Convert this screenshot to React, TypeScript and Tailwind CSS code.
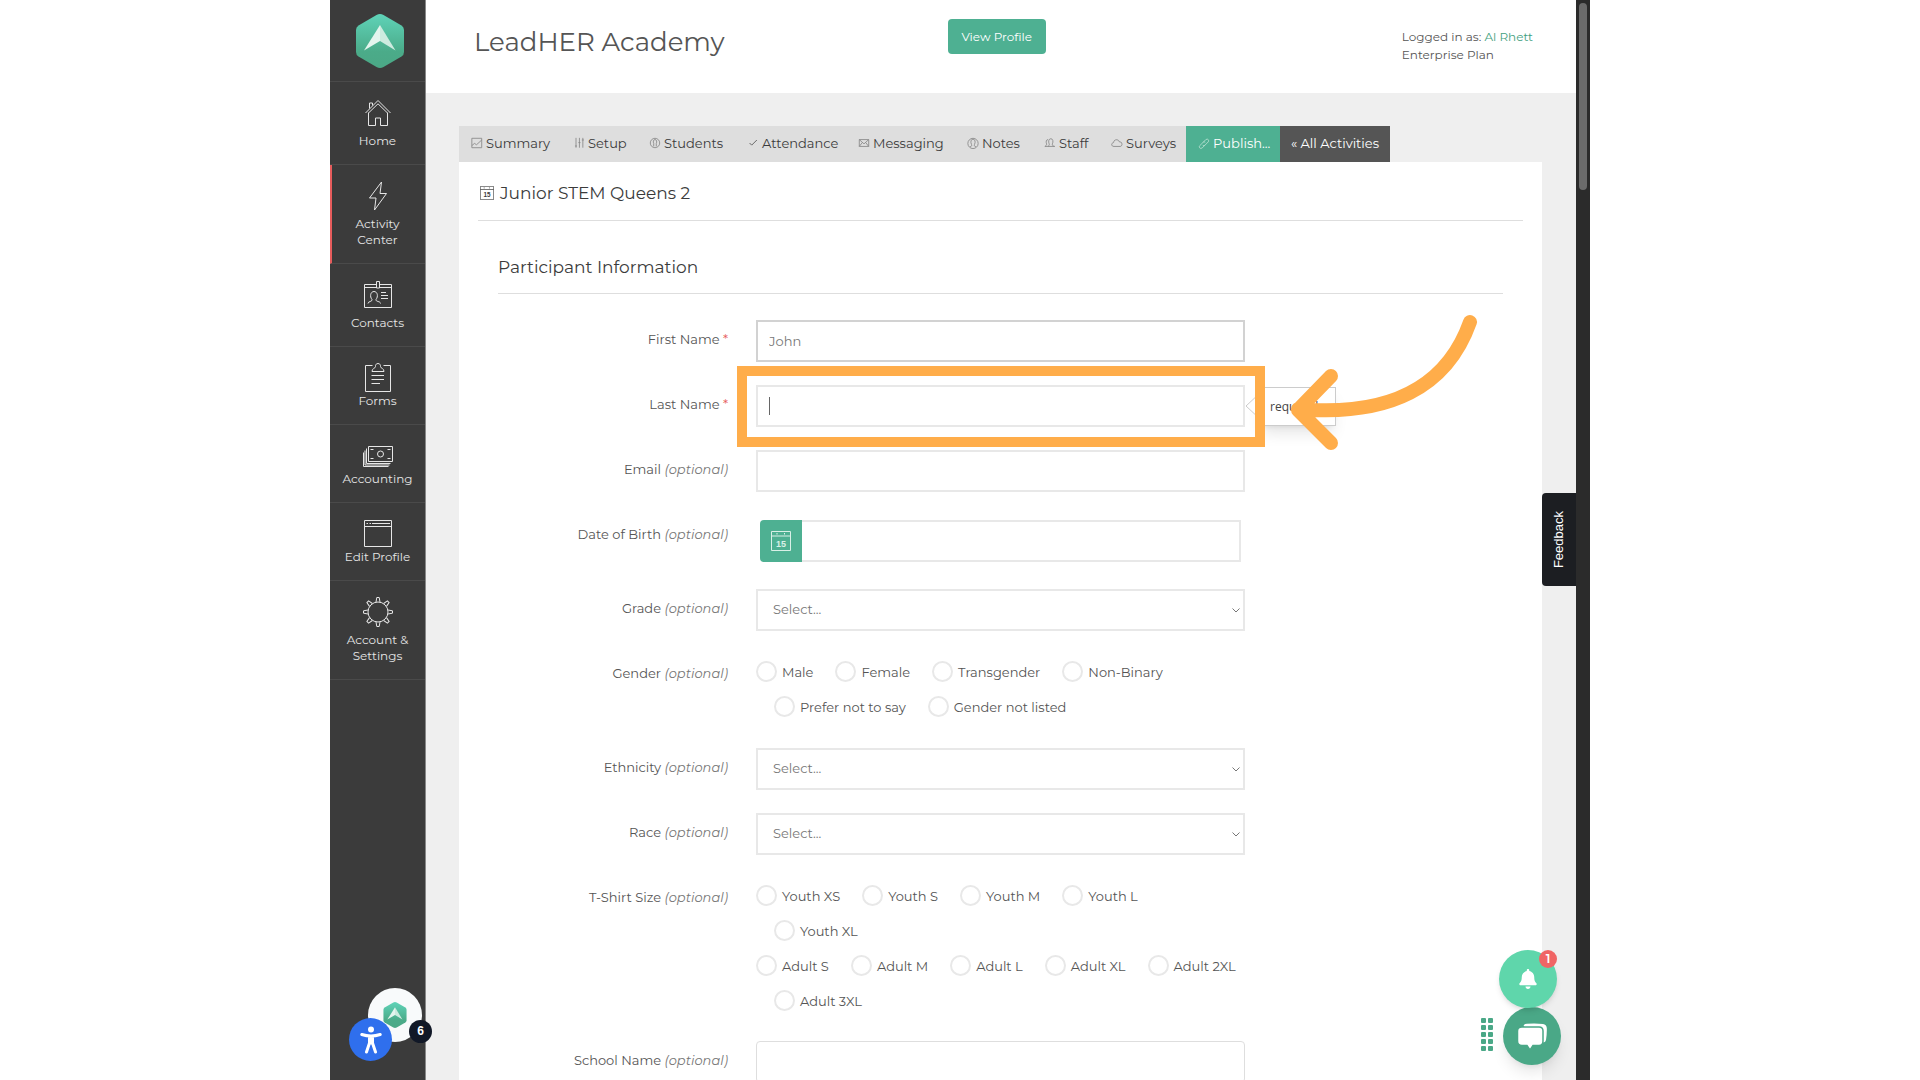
import type { ReactNode } from 'react'
import { FaBell } from 'react-icons/fa'

const Icon = ({ size = 30, box = 30, children }: { size?: number; box?: number; children: ReactNode }) => (
    <svg width={size} height={size} viewBox={`0 0 ${box} ${box}`} fill="none" stroke="currentColor" className="shrink-0">
        {children}
    </svg>
)

const HexLogo = ({ className }: { className: string }) => (
    <svg viewBox="0 0 48 54" className={className}>
        <defs>
            <linearGradient id="hex" x1="0" y1="0" x2="0" y2="1">
                <stop offset="0" stopColor="#5fd3b8" />
                <stop offset="0.7" stopColor="#4bab89" />
                <stop offset="1" stopColor="#4ba886" />
            </linearGradient>
        </defs>
        <path d="M20.500 1Q24 -0.800 27.500 1L45.500 11.500Q48 13 48 16V38Q48 41 45.500 42.500L27.500 53Q24 54.800 20.500 53L2.500 42.500Q0 41 0 38V16Q0 13 2.500 11.500Z" fill="url(#hex)" />
        <path d="M24 11L8 36.500L24 27Z" fill="#e4f5ee" />
        <path d="M24 11L39.500 36.500L24 27Z" fill="#cdebdf" />
    </svg>
)

const HomeIcon = () => (
    <Icon>
        <path d="M2.500 15L15 2.500L27.500 15M5.500 14.500V27.500H12.500V20H17.500V27.500H24.500V14.500M5.500 15L15 5.800L24.500 15M6.500 10.500V5H9.500V7.500" />
    </Icon>
)

const BoltIcon = () => (
    <Icon>
        <path d="M18.500 1L6.500 17H13L11.500 29L23.500 12.500H17Z" />
    </Icon>
)

const ContactsIcon = () => (
    <Icon>
        <path d="M13 4.500H1.500V27.500H28.500V4.500H17M1.500 7.500H13M17 7.500H28.500M13.500 1.500H16.500V8H13.500ZM18 12.500H23M18 15.500H25M18 18.500H25" />
        <path d="M5 23.500C5 21 9.500 22 9 19.500C6.500 16.500 7.500 11.500 11 11.500S15.500 16.500 13 19.500C12.500 22 17.500 21 17.500 23.500" />
    </Icon>
)

const FormsIcon = () => (
    <Icon>
        <path d="M9.500 2.500H2.500V28.500H27.500V2.500H20.500M9 8.500H21C21 5 18 6 17.500 3.500C18 -0.500 12 -0.500 12.500 3.500C12 6 9 5 9 8.500ZM8.500 12.500H21M8.500 16.500H21M8.500 20.500H17" />
    </Icon>
)

const MoneyIcon = () => (
    <Icon>
        <path d="M5.500 5.500H29.500V20.500H5.500ZM3.500 7.500V22.500H27.500M2 9.500V24H26.500M0.500 11.500V25.500H25.500M7.500 8.500H10.500M24.500 8.500H27.500M7.500 17.500H10.500M24.500 17.500H27.500" />
        <circle cx="17.500" cy="13" r="3" />
    </Icon>
)

const WindowIcon = () => (
    <Icon>
        <path d="M1.500 1.500H28.500V27.500H1.500ZM1.500 7.500H28.500M3.500 4.500H5M6.500 4.500H8M9 4.500H27" />
    </Icon>
)

const GearIcon = () => (
    <Icon>
        <circle cx="15" cy="15" r="10" />
        {[0, 45, 90, 135, 180, 225, 270, 315].map((a) => (
            <path key={a} d="M13 5L13.800 0.500H16.200L17 5" transform={`rotate(${a} 15 15)`} />
        ))}
    </Icon>
)

const CalendarIcon = ({ size }: { size: number }) => (
    <svg width={size} height={size} viewBox="0 0 20 20" fill="none" stroke="currentColor" className="shrink-0">
        <path d="M0.500 0.500H19.500V19.500H0.500ZM0.500 5H19.500M6 2V3.500M13.500 2V3.500" />
        <text x="10" y="15.500" textAnchor="middle" fontSize="9" fontWeight="700" fontFamily="Liberation Sans, sans-serif" fill="currentColor" stroke="none">
            15
        </text>
    </svg>
)

const person = 'M3.500 11.500C5.500 11 5.800 10 5.300 8.800C3.800 6 4.500 2.500 7 2.500S10.200 6 8.700 8.800C8.200 10 8.500 11 10.500 11.500'

const tabs = [
    { name: 'Summary', width: 'w-[102px]', icon: <path d="M1 1.500H12.500V12.500H1ZM1 10L4 7.500L6.500 9L12.500 3.500" /> },
    { name: 'Setup', width: 'w-[76px]', icon: <path d="M3.500 1V12.500M2.300 10.500H4.700M7.500 1V12.500M6.300 6.500H8.700M11.500 1V12.500M10.300 3.500H12.700" /> },
    { name: 'Students', width: 'w-[98px]', icon: <><circle cx="7" cy="7" r="5.500" /><path d="M5.500 11V7.500C4.500 5.500 5 3 7 3S9.500 5.500 8.500 7.500V11" /></> },
    { name: 'Attendance', width: 'w-[111px]', icon: <path d="M3 7L5.500 9.500L11.500 3.500" stroke="#555" /> },
    { name: 'Messaging', width: 'w-[109px]', icon: <path d="M1.500 3H12.500V11H1.500ZM1.500 3L7 8L12.500 3M1.500 11L5 6.500M12.500 11L9 6.500" /> },
    { name: 'Notes', width: 'w-[77px]', icon: <><circle cx="7" cy="7.500" r="6" /><path d={person} /></> },
    { name: 'Staff', width: 'w-[67px]', icon: <><path d="M4 11C6 10.500 6.500 9.500 6 8C4.800 5.500 5.500 2 8 2S11 5.500 9.800 8C9.500 9.500 10 10.500 12.500 11Z" /><path d="M1 11C2.500 10 3.300 9.500 3 8C2 5.500 2.500 3 4.800 3M1 11H4" /></> },
    { name: 'Surveys', width: 'w-[87px]', icon: <path d="M3.500 11C0 11 0 7 3 6.500C3 2.500 9 2 9.500 5.500C13.500 5 14 11 10.500 11Z" /> },
]

const navItems = [
    { name: 'Home', icon: <HomeIcon />, roomy: true },
    { name: 'Activity Center', icon: <BoltIcon />, roomy: true, active: true },
    { name: 'Contacts', icon: <ContactsIcon />, roomy: true },
    { name: 'Forms', icon: <FormsIcon /> },
    { name: 'Accounting', icon: <MoneyIcon /> },
    { name: 'Edit Profile', icon: <WindowIcon /> },
    { name: 'Account & Settings', icon: <GearIcon />, roomy: true },
]

const Sidebar = () => (
    <nav className="w-24 shrink-0 bg-[#3b3b3b] border-r border-[#888] text-[#e6e6e6]">
        <a href="#" className="flex justify-center items-start pt-3.5 pl-1 h-[82px] border-b border-[#4a4a4a]">
            <HexLogo className="w-12 h-[54px]" />
        </a>
        {navItems.map((item) => (
            <a
                key={item.name}
                href="#"
                className={`flex flex-col items-center px-3 pt-4 pb-[15px] border-b border-b-[#4a4a4a] text-xs leading-4 text-center ${
                    item.active ? 'border-l-2 border-l-[#e65c5c] pr-3.5' : ''
                } ${item.roomy ? 'gap-[5px]' : ''}`}
            >
                {item.icon}
                {item.name}
            </a>
        ))}
    </nav>
)

const Row = ({ label, id, required, className = 'h-[65px]', children }: { label: string; id: string; required?: boolean; className?: string; children: ReactNode }) => (
    <div className={`flex gap-7 ${className}`}>
        <label htmlFor={id} className="w-[230px] shrink-0 pt-[9px] text-right text-[13px] leading-5 whitespace-nowrap">
            {label} {required ? <span className="text-[#e65c5c]">*</span> : <em className="text-[#777]">(optional)</em>}
        </label>
        <div className="relative w-[489px]">{children}</div>
    </div>
)

const inputStyle = 'block w-full h-[42px] border-2 border-[#e8e8e8] bg-white px-[11px] text-[13px] text-[#777] outline-none'

const SelectBox = ({ id }: { id: string }) => (
    <>
        <select id={id} className="block w-full h-[42px] appearance-none border-2 border-[#e8e8e8] bg-white px-[15px] text-[13px] text-[#777]">
            <option>Select...</option>
        </select>
        <svg viewBox="0 0 8 5" fill="none" stroke="#777" className="pointer-events-none absolute right-[5px] top-[19px] w-2 h-[5px]">
            <path d="M0.500 0.500L4 4L7.500 0.500" />
        </svg>
    </>
)

const RadioLine = ({ group, items, indent }: { group: string; items: string[]; indent?: boolean }) => (
    <div className={`flex items-center gap-[22px] h-[35px] ${indent ? 'ml-[18px]' : ''}`}>
        {items.map((item) => (
            <label key={item} className="flex items-center gap-[5px] text-[13px] leading-5 whitespace-nowrap">
                <input type="radio" name={group} className="appearance-none w-[21px] h-[21px] rounded-full border-2 border-[#e8e8e8] bg-white" />
                {item}
            </label>
        ))}
    </div>
)

const Callout = () => (
    <>
        {/* validation bubble */}
        <div className="absolute left-[503px] top-0.5 flex items-center w-[77px] h-[39px] pl-2.5 border border-[#ccc] bg-white shadow-lg font-['Open_Sans',sans-serif] text-xs text-[#444]">
            required
        </div>
        <svg viewBox="0 0 15 26" className="absolute left-[489px] top-2 w-[15px] h-[26px]">
            <path d="M15 0L1 13L15 26" fill="#fff" stroke="#ccc" />
        </svg>
        {/* highlight and arrow */}
        <div className="absolute -left-[19px] -right-[20px] -top-[19px] -bottom-[20px] border-10 border-[#ffad4a]"></div>
        <svg viewBox="0 0 265 155" fill="none" stroke="#ffad4a" strokeWidth="14" strokeLinecap="round" strokeLinejoin="round" className="absolute left-[469px] -top-20 w-[265px] h-[155px]">
            <path d="M245 17C222 82 165 112 73 104M106 71L73 105L106 138" />
        </svg>
    </>
)

const ParticipantForm = () => (
    <form className="mt-[26px]">
        <Row label="First Name" id="first" required>
            <input id="first" type="text" defaultValue="John" className={`${inputStyle} border-[#d2d2d2]!`} />
        </Row>
        <Row label="Last Name" id="last" required>
            <div className="relative z-10">
                <input id="last" type="text" className={inputStyle} />
                <span className="absolute left-[13px] top-3 w-px h-[18px] bg-[#666]"></span>
                <Callout />
            </div>
        </Row>
        <Row label="Email" id="email">
            <input id="email" type="email" className={inputStyle} />
        </Row>
        <Row label="Date of Birth" id="dob" className="h-[74px]">
            <div className="flex mx-1 pt-[5px]">
                <button type="button" aria-label="Pick a date" className="flex items-center justify-center w-[42px] h-[42px] shrink-0 rounded-l bg-[#4eb092] text-[#d9f0e7]">
                    <CalendarIcon size={20} />
                </button>
                <input id="dob" type="text" className={`${inputStyle} border-l-0`} />
            </div>
        </Row>
        <Row label="Grade" id="grade">
            <SelectBox id="grade" />
        </Row>
        <Row label="Gender" id="gender" className="h-[94px]">
            <div id="gender" role="radiogroup">
                <RadioLine group="gender" items={['Male', 'Female', 'Transgender', 'Non-Binary']} />
                <RadioLine group="gender" items={['Prefer not to say', 'Gender not listed']} indent />
            </div>
        </Row>
        <Row label="Ethnicity" id="ethnicity">
            <SelectBox id="ethnicity" />
        </Row>
        <Row label="Race" id="race">
            <SelectBox id="race" />
        </Row>
        <Row label="T-Shirt Size" id="shirt" className="h-[163px]">
            <div id="shirt" role="radiogroup">
                <RadioLine group="shirt" items={['Youth XS', 'Youth S', 'Youth M', 'Youth L']} />
                <RadioLine group="shirt" items={['Youth XL']} indent />
                <RadioLine group="shirt" items={['Adult S', 'Adult M', 'Adult L', 'Adult XL', 'Adult 2XL']} />
                <RadioLine group="shirt" items={['Adult 3XL']} indent />
            </div>
        </Row>
        <Row label="School Name" id="school">
            <input id="school" type="text" className={`${inputStyle} border! border-[#dedede]! rounded`} />
        </Row>
    </form>
)

const FloatingWidgets = () => (
    <>
        <button className="absolute right-3.5 top-[493px] flex items-center justify-center w-[34px] h-[93px] rounded-l bg-[#1c1e22] text-white">
            <span className="[writing-mode:vertical-rl] rotate-180 font-['Liberation_Sans',sans-serif] text-[13px] leading-4">Feedback</span>
        </button>

        {/* notifications and chat */}
        <button aria-label="Chat" className="absolute right-[29px] bottom-[15px] w-[58px] h-[58px] rounded-full bg-[#4aa887] shadow-lg flex items-center justify-center">
            <svg viewBox="0 0 30 27" className="w-[30px] h-[27px]">
                <path d="M6.500 3Q7 0.800 10 0.800Q18 0 26 1Q29.500 1.500 29.800 5Q30 11 29 17Q28.500 19 26.500 19.500" fill="#fff" />
                <path d="M5 4H22Q26 4 26 8V18Q26 22.500 22 22.500H16L13 27L10 22.500H5Q0.500 22.500 0.500 18V8Q0.500 4 5 4Z" fill="#fff" stroke="#4aa887" strokeWidth="1.500" />
            </svg>
        </button>
        <button aria-label="Notifications" className="absolute right-[33px] bottom-[72px] w-[58px] h-[58px] rounded-full bg-[#5fd6ab] shadow-md flex items-center justify-center text-white">
            <FaBell size={20} />
            <span className="absolute right-0 top-0 w-[18px] h-[18px] rounded-full bg-[#f06565] text-xs leading-[18px] font-semibold">1</span>
        </button>
        <div className="absolute right-[97px] bottom-[29px] grid grid-cols-2 gap-0.5">
            {Array.from({ length: 10 }, (_, i) => (
                <span key={i} className="w-[5px] h-[5px] rounded-[1px] bg-[#4aa887]"></span>
            ))}
        </div>

        {/* help and accessibility */}
        <button aria-label="Help" className="absolute left-[38px] bottom-[38px] w-[54px] h-[54px] rounded-full bg-[#f8fafb] flex items-center justify-center">
            <HexLogo className="w-6 h-[26px]" />
        </button>
        <span className="absolute left-[79px] bottom-[37px] w-[23px] h-[23px] rounded-full bg-[#111827] text-white font-['Liberation_Sans',sans-serif] text-xs leading-[23px] font-bold text-center">6</span>
        <button aria-label="Accessibility" className="absolute left-[19px] bottom-[19px] w-[43px] h-[43px] rounded-full bg-[#2f6fed] flex items-center justify-center">
            <svg viewBox="0 0 22 28" className="w-[22px] h-7" fill="none" stroke="#fff" strokeWidth="3" strokeLinecap="round" strokeLinejoin="round">
                <circle cx="11" cy="3.500" r="3" fill="#fff" stroke="none" />
                <path d="M1.800 8.500Q11 11.500 20.200 8.500M9.500 10.500V17L6.500 26M12.500 10.500V17L15.500 26M11 10.500V17" />
            </svg>
        </button>
    </>
)

const App = () => {
    return (
        <div className="min-h-screen bg-white font-['Montserrat','Inter',sans-serif] text-[#555]">
            <div className="relative flex h-screen max-w-[1260px] mx-auto overflow-hidden">
                <Sidebar />

                <main className="flex-1 min-w-0 bg-[#efefef]">
                    <header className="grid grid-cols-[35fr_auto_36fr] items-start h-[93px] bg-white pl-12 pr-[43px]">
                        <h1 className="pt-6 text-[26px] leading-9">LeadHER Academy</h1>
                        <button className="mt-[19px] h-[35px] w-[98px] rounded bg-[#4eb092] text-xs text-white">View Profile</button>
                        <p className="justify-self-end pt-7 text-xs leading-[18px]">
                            Logged in as: <a href="#" className="text-[#3f9f80]">Al Rhett</a>
                            <br />
                            Enterprise Plan
                        </p>
                    </header>

                    <div className="pl-[33px] pr-[34px] pt-[33px]">
                        <div className="flex h-9 text-[13px] text-[#3b3b3b]">
                            {tabs.map((tab) => (
                                <a key={tab.name} href="#" className={`flex items-center gap-[3px] pl-3 bg-[#dedede] whitespace-nowrap ${tab.width}`}>
                                    <span className="pb-0.5 text-[#888]">
                                        <Icon size={12} box={14}>{tab.icon}</Icon>
                                    </span>
                                    {tab.name}
                                </a>
                            ))}
                            <a href="#" className="flex items-center gap-[3px] w-[94px] pl-3 bg-[#4eb092] text-white">
                                <Icon size={12} box={14}>
                                    <path stroke="#b5dfd0" d="M6 5L9 2Q11 0.500 12 2T12 4.500L8 8.500Q7 9.500 5.500 8.500M8 8.500L5 11.500Q3 13 2 11.500T2 9L6 5Q7 4 8.500 5" />
                                </Icon>
                                Publish...
                            </a>
                            <a href="#" className="flex items-center justify-center w-[110px] bg-[#555] text-white">
                                « All Activities
                            </a>
                        </div>

                        <section className="bg-white px-[19px]">
                            <h2 className="flex items-center gap-1.5 pt-[17px] pb-[13px] pl-0.5 border-b border-[#dedede] text-[17px] leading-7 text-[#3b3b3b]">
                                <CalendarIcon size={14} />
                                Junior STEM Queens 2
                            </h2>
                            <div className="px-5">
                                <h3 className="pt-8 pb-3 border-b border-[#dedede] text-[17px] leading-7 text-[#3b3b3b]">Participant Information</h3>
                                <ParticipantForm />
                            </div>
                        </section>
                    </div>
                </main>

                {/* scrollbar */}
                <div className="w-3.5 shrink-0 bg-[#2b2b2b] pt-[3px]">
                    <div className="w-2 h-[187px] mx-auto rounded-full bg-[#6b6b6b]"></div>
                </div>

                <FloatingWidgets />
            </div>
        </div>
    )
}

export default App
